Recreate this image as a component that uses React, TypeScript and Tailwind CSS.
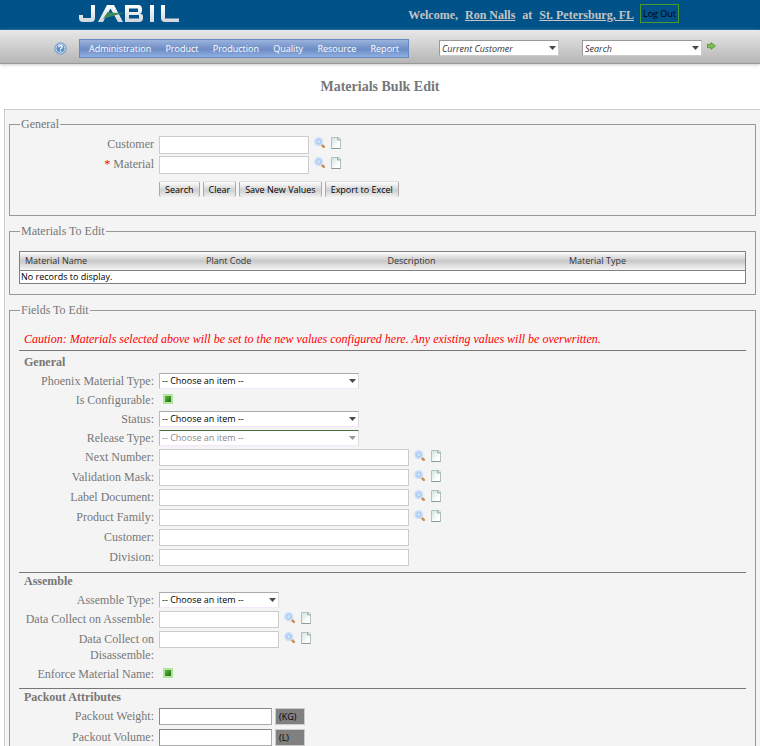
import React from "react";

const SERIF = "font-['Liberation_Serif',serif]";
const SANS = "font-['Open_Sans',sans-serif]";

function Logo() {
  return (
    <svg width="100" height="18" viewBox="0 0 100 18" role="img" aria-label="Jabil">
      <defs>
        <linearGradient id="silver" x1="0" y1="0" x2="0" y2="1">
          <stop offset="0" stopColor="#ffffff" />
          <stop offset="1" stopColor="#cfd6dc" />
        </linearGradient>
      </defs>
      <g fill="url(#silver)">
        <path d="M12 0h4v13q0 4-4 4H4q-4 0-4-4v-3h4v3h8z" />
        <path d="M28 0h7l9 17h-5L31.500 3.500 24 17h-5z" />
        <path fillRule="evenodd" d="M46 0h13q4 0 4 4v2q0 2-2 2.500 3 .5 3 3V13q0 4-4 4H46zm4 3.500v3.500h9V3.500zm0 6.500v3.500h10V10z" />
        <path d="M71 0h4v17h-4z" />
        <path d="M82 0h4v13.500h14V17H86q-4 0-4-4z" />
      </g>
      <path d="M24 14l4.500-7q9 1.500 18.500 .6Q37 10 24 14z" fill="#3f8a5c" />
    </svg>
  );
}

function HelpIcon() {
  return (
    <svg width="13" height="13" viewBox="0 0 13 13" aria-hidden="true">
      <circle cx="6.500" cy="6.500" r="5.800" fill="#4a80c0" stroke="#8aaad2" strokeWidth="1" />
      <circle cx="6.500" cy="6.500" r="4.600" fill="#5c8fca" stroke="#e6f0fa" strokeWidth="1" />
      <path d="M4.800 5.200q0-1.700 1.700-1.700t1.700 1.500q0 .8-.9 1.300t-.8 1.200M6.500 8.600v1.100" fill="none" stroke="#fff" strokeWidth="1.300" />
    </svg>
  );
}

function MagnifierIcon() {
  return (
    <svg width="12" height="12" viewBox="0 0 12 12" aria-hidden="true">
      <path d="M7.800 7.800l2 2" stroke="#c98f55" strokeWidth="2.600" strokeLinecap="round" />
      <circle cx="4.800" cy="4.700" r="4" fill="#bdd8f7" stroke="#d3e1f4" strokeWidth="1.200" />
      <circle cx="4.800" cy="4.700" r="2" fill="#d3e7fc" stroke="#9cc2ee" strokeWidth=".8" />
    </svg>
  );
}

function PageIcon() {
  return (
    <svg width="10" height="12" viewBox="0 0 10 12" aria-hidden="true">
      <defs>
        <linearGradient id="sheet" x1="0" y1="0" x2="1" y2="1">
          <stop offset="0" stopColor="#cfe2df" />
          <stop offset=".7" stopColor="#ffffff" />
        </linearGradient>
      </defs>
      <path d="M.5.5H8L9.500 2v9.500h-9z" fill="url(#sheet)" stroke="#b0c2be" />
      <path d="M6.500.5V3h3" fill="#c4d6d2" stroke="#8fa6a1" strokeWidth=".8" />
      <path d="M.5 11.500h9" stroke="#8b9b98" />
    </svg>
  );
}

function GoIcon() {
  return (
    <svg width="9" height="8" viewBox="0 0 9 8" aria-hidden="true">
      <path d="M.5 2.300h3.500V.6L8.300 4 4 7.400V5.700H.5z" fill="#7cc04f" stroke="#4f9a35" strokeWidth=".9" />
    </svg>
  );
}

function Caret({ faded = false }: { faded?: boolean }) {
  return (
    <svg
      className="pointer-events-none absolute right-[3px] top-[6px]"
      width="7"
      height="4"
      viewBox="0 0 7 4"
      aria-hidden="true"
    >
      <path d="M0 0h7L3.500 4z" fill={faded ? "#999" : "#4a4a4a"} />
    </svg>
  );
}

function FieldLabel({ id, children, required }: { id: string; children: React.ReactNode; required?: boolean }) {
  return (
    <label htmlFor={id} className="w-[135px] shrink-0 text-right">
      {required && <span className="text-[#f00]">* </span>}
      {children}
    </label>
  );
}

function Lookup({ name }: { name: string }) {
  return (
    <span className="flex gap-[5px] pl-[5px] pt-[1px]">
      <button type="button" aria-label={`Find ${name}`} className="h-3"><MagnifierIcon /></button>
      <button type="button" aria-label={`Clear ${name}`} className="h-3"><PageIcon /></button>
    </span>
  );
}

type TextRowProps = { id: string; label: string; width: string; lookup?: boolean; required?: boolean; tall?: boolean };

function TextRow({ id, label, width, lookup, required, tall }: TextRowProps) {
  return (
    <div className="flex min-h-5 items-start gap-[5px]">
      <FieldLabel id={id} required={required}>{label}</FieldLabel>
      <div className="flex items-start">
        <input id={id} type="text" className={`border border-[#ccc] bg-white px-1 text-[9px] ${tall ? "h-[18px]" : "h-[17px]"} ${width}`} />
        {lookup && <Lookup name={label} />}
      </div>
    </div>
  );
}

function SelectRow({ id, label, width, disabled }: { id: string; label: string; width: string; disabled?: boolean }) {
  return (
    <div className="flex h-[19px] items-start gap-[5px]">
      <FieldLabel id={id}>{label}</FieldLabel>
      <div className={`relative ${width}`}>
        <select
          id={id}
          disabled={disabled}
          className={`block h-4 w-full appearance-none border border-b-[#f3e6fa] border-l-[#bbb] border-r-[#ddd] bg-white pl-[2px] text-[9px] leading-[14px] opacity-100 ${SANS} ${
            disabled ? "border-t-[#4a7040] text-[#888]" : "border-t-[#aaa] text-black"
          }`}
        >
          <option>-- Choose an item --</option>
        </select>
        <Caret faded={disabled} />
      </div>
    </div>
  );
}

function CheckRow({ id, label }: { id: string; label: string }) {
  return (
    <div className="flex h-[19px] items-start gap-[5px]">
      <FieldLabel id={id}>{label}</FieldLabel>
      <input
        id={id}
        type="checkbox"
        defaultChecked
        className="ml-1 mt-[2px] size-[10px] appearance-none border-2 border-[#b4e39c] bg-[#3c9a24] checked:bg-linear-to-br checked:from-[#5cb83c] checked:to-[#1f6f12]"
      />
    </div>
  );
}

function UnitRow({ id, label, unit }: { id: string; label: string; unit: string }) {
  return (
    <div className="flex h-[21px] items-start gap-[5px]">
      <FieldLabel id={id}>{label}</FieldLabel>
      <div className="flex gap-[3px]">
        <input id={id} type="text" className="h-[17px] w-[113px] border border-[#aaa] border-l-[#888] border-t-[#888] bg-white px-1 text-[9px]" />
        <span className={`h-[17px] w-[30px] border border-[#ccc] bg-[#808080] pl-[3px] text-[9px] leading-[15px] text-black ${SANS}`}>{unit}</span>
      </div>
    </div>
  );
}

function Group({ title, children }: { title: string; children: React.ReactNode }) {
  return (
    <fieldset className="min-w-0 border border-[#999] px-[9px]">
      <legend className="ml-[1px] px-[1px] leading-4">{title}</legend>
      {children}
    </fieldset>
  );
}

function Section({ title, roomy, children }: { title: string; roomy?: boolean; children: React.ReactNode }) {
  return (
    <section className={`border-t border-[#777] ${roomy ? "pt-[3px]" : ""}`}>
      <h2 className="pl-[5px] font-bold leading-4">{title}</h2>
      <div className="py-[3px]">{children}</div>
    </section>
  );
}

const MENU = ["Administration", "Product", "Production", "Quality", "Resource", "Report"];
const ACTIONS = ["Search", "Clear", "Save New Values", "Export to Excel"];
const COLUMNS = ["Material Name", "Plant Code", "Description", "Material Type"];

function TopSelect({ label, gap }: { label: string; gap: string }) {
  return (
    <div className={`relative w-[120px] shrink-0 ${gap}`}>
      <select
        aria-label={label}
        className={`block h-4 w-full appearance-none border border-[#ccc] border-l-[#999] border-t-[#999] bg-white pl-[2px] pt-[2px] text-[9px] italic leading-3 text-[#333] ${SANS}`}
      >
        <option>{label}</option>
      </select>
      <Caret />
    </div>
  );
}

export default function App() {
  return (
    <div className={`h-screen overflow-hidden bg-white text-[12px] leading-4 text-[#777] ${SERIF}`}>
      <header className="flex h-[30px] items-start bg-[#005288] pl-[79px] pr-[81px]">
        <div className="pt-[5px]"><Logo /></div>
        <div className="ml-auto flex items-start gap-[6px] font-bold text-[#c4c4c4]">
          <div className="flex gap-[7px] pt-[7px]">
            <span>Welcome,</span>
            <a href="#user" className="underline">Ron Nalls</a>
            <span>at</span>
            <a href="#site" className="underline">St. Petersburg, FL</a>
          </div>
          <button type="button" className={`mt-1 h-[19px] w-[39px] border border-[#4a9a2e] text-[9px] font-normal leading-[17px] text-black ${SANS}`}>
            Log Out
          </button>
        </div>
      </header>

      <div className="flex h-[34px] items-start border-b border-[#999] bg-linear-to-b from-[#e8e8e8] to-[#b6b6b6] pl-[54px] shadow-[0_1px_3px_#ccc]">
        <button type="button" aria-label="Help" className="mt-3"><HelpIcon /></button>
        <nav className="ml-3 mt-[9px] flex h-[19px] w-[330px] shrink-0 items-center justify-between border border-[#6687bf] bg-linear-to-b from-[#9ab3dc] via-[#6d8cc5] via-55% to-[#8fb0e2] px-[9px]">
          {MENU.map((item) => (
            <a key={item} href="#menu" className={`text-[9px] leading-4 text-white ${SANS}`}>{item}</a>
          ))}
        </nav>
        <div className="flex pt-[10px]">
          <TopSelect label="Current Customer" gap="ml-[30px]" />
          <TopSelect label="Search" gap="ml-[23px]" />
          <button type="button" aria-label="Go" className="ml-[5px] h-3"><GoIcon /></button>
        </div>
      </div>

      <h1 className="pt-[15px] text-center text-[14px] font-bold leading-4">Materials Bulk Edit</h1>

      <main className="mt-[14px] ml-1 flex flex-col gap-[7px] border-l border-t border-[#ccc] bg-[#f4f4f4] pb-4 pl-1 pr-1 pt-[6px]">
        <Group title="General">
          <div className="pb-[18px] pt-1">
            <TextRow id="customer" label="Customer" width="w-[150px]" lookup tall />
            <TextRow id="material" label="Material" width="w-[150px]" lookup required tall />
            <div className="flex gap-[3px] pl-[140px] pt-[5px]">
              {ACTIONS.map((action) => (
                <button
                  key={action}
                  type="button"
                  className={`h-4 rounded-[2px] border-x border-t border-x-[#aaa] border-t-[#ddd] bg-linear-to-b from-[#fff] via-[#d0d0d0] via-55% to-[#f0f0f0] px-[5px] text-[9px] leading-[15px] text-black ${SANS}`}
                >
                  {action}
                </button>
              ))}
            </div>
          </div>
        </Group>

        <Group title="Materials To Edit">
          <div className="pb-[10px] pt-3">
            <table className={`w-full table-fixed border-collapse border border-[#808080] bg-white text-left text-[9px] text-[#333] ${SANS}`}>
              <thead className="border-b border-[#808080] bg-linear-to-b from-[#fff] via-[#c8c8c8] via-50% to-[#f6f6f6]">
                <tr>
                  {COLUMNS.map((column) => (
                    <th key={column} scope="col" className="h-[19px] pl-[5px] font-normal leading-4">{column}</th>
                  ))}
                </tr>
              </thead>
              <tbody>
                <tr><td colSpan={4} className="h-[13px] pl-[1px] leading-3 text-black">No records to display.</td></tr>
              </tbody>
            </table>
          </div>
        </Group>

        <Group title="Fields To Edit">
          <p className="pb-[3px] pl-[5px] pt-[13px] italic text-[#f00]">
            Caution: Materials selected above will be set to the new values configured here. Any existing values will be overwritten.
          </p>
          <Section title="General" roomy>
            <SelectRow id="phoenix" label="Phoenix Material Type:" width="w-[200px]" />
            <CheckRow id="configurable" label="Is Configurable:" />
            <SelectRow id="status" label="Status:" width="w-[200px]" />
            <SelectRow id="release" label="Release Type:" width="w-[200px]" disabled />
            <TextRow id="next" label="Next Number:" width="w-[250px]" lookup />
            <TextRow id="mask" label="Validation Mask:" width="w-[250px]" lookup />
            <TextRow id="document" label="Label Document:" width="w-[250px]" lookup />
            <TextRow id="family" label="Product Family:" width="w-[250px]" lookup />
            <TextRow id="field-customer" label="Customer:" width="w-[250px]" />
            <TextRow id="division" label="Division:" width="w-[250px]" />
          </Section>
          <Section title="Assemble">
            <SelectRow id="assemble" label="Assemble Type:" width="w-[120px]" />
            <TextRow id="collect-assemble" label="Data Collect on Assemble:" width="w-[120px]" lookup />
            <TextRow id="collect-disassemble" label="Data Collect on Disassemble:" width="w-[120px]" lookup />
            <div className="pt-[3px]"><CheckRow id="enforce" label="Enforce Material Name:" /></div>
          </Section>
          <Section title="Packout Attributes">
            <UnitRow id="weight" label="Packout Weight:" unit="(KG)" />
            <UnitRow id="volume" label="Packout Volume:" unit="(L)" />
          </Section>
        </Group>
      </main>
    </div>
  );
}
